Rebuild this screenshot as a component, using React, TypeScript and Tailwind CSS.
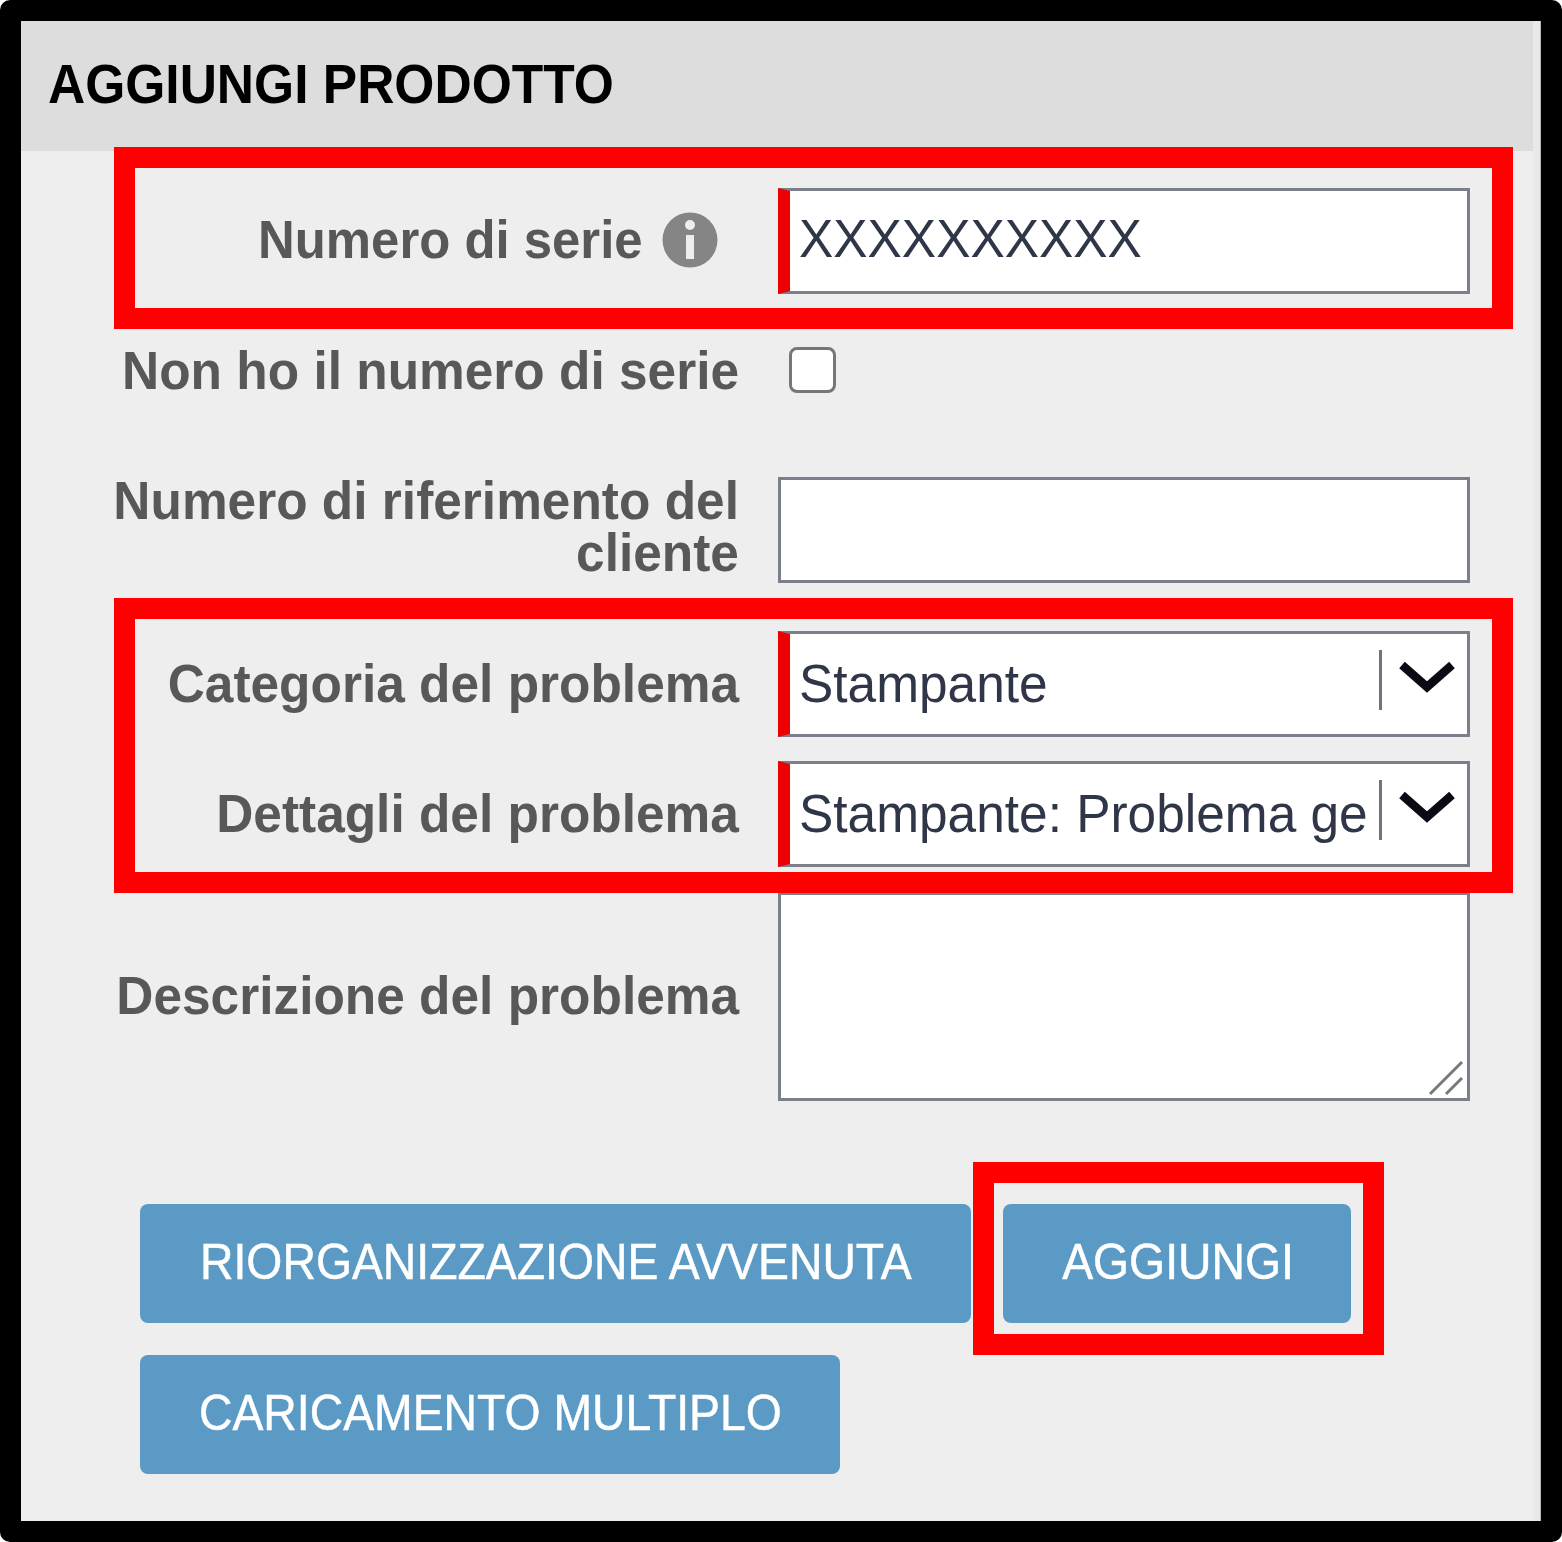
import React from "react";

const font = { fontFamily: '"Liberation Sans", Arial, sans-serif' };

function Label({ children, className = "" }: { children: React.ReactNode; className?: string }) {
  return (
    <div className={"w-[718px] shrink-0 text-right text-[53px] leading-[52px] font-bold text-[#585858] " + className}>
      {children}
    </div>
  );
}

function Narrow({ children, className = "scale-x-[0.97]" }: { children: React.ReactNode; className?: string }) {
  return <span className={"inline-block origin-right whitespace-nowrap " + className}>{children}</span>;
}

function Field({ required = false, children, className = "h-[106px]" }: { required?: boolean; children?: React.ReactNode; className?: string }) {
  return (
    <div className={"relative ml-[39px] flex w-[692px] shrink-0 items-center border-[3px] border-[#7b7f8a] bg-white " + (required ? "border-l-[12px] border-l-[#ee0000] " : "") + className}>
      {children}
    </div>
  );
}

function FieldText({ children }: { children: React.ReactNode }) {
  return (
    <span className="ml-[9px] inline-block origin-left scale-x-[0.97] whitespace-nowrap text-[53px] leading-[60px] text-[#2f3648]">
      {children}
    </span>
  );
}

function Select({ text }: { text: string }) {
  return (
    <Field required>
      <FieldText>{text}</FieldText>
      <span className="absolute left-[589px] top-[16px] h-[60px] w-[3px] bg-[#6f7380]" />
      <svg className="absolute left-[607px] top-[26px]" width="60" height="36" viewBox="0 0 60 36">
        <path d="M5 5 L30 27 L55 5" fill="none" stroke="#0a0a14" strokeWidth="8.5" />
      </svg>
    </Field>
  );
}

function Btn({ children, className = "" }: { children: React.ReactNode; className?: string }) {
  return (
    <button className={"flex h-[119px] items-center justify-center rounded-[8px] bg-[#5a9ac5] text-white " + className}>
      <span className="inline-block origin-center -translate-y-[1px] scale-x-[0.927] whitespace-nowrap text-[50px] [-webkit-text-stroke:0.5px_white]">
        {children}
      </span>
    </button>
  );
}

function RedBox({ className }: { className: string }) {
  return <div className={"absolute border-[21px] border-[#ff0000] " + className} />;
}

export default function App() {
  return (
    <div className="relative flex h-[1542px] w-[1562px] rounded-[10px] border-[21px] border-black bg-[#eeeeee]" style={font}>
      <div className="flex min-w-0 flex-1 flex-col">
        <div className="flex h-[130px] items-center bg-[#dddddd] pb-[4px] pl-[27px]">
          <h1 className="origin-left scale-x-[0.92] whitespace-nowrap text-[56px] font-bold text-black">AGGIUNGI PRODOTTO</h1>
        </div>

        <div className="mt-[37px] flex items-center">
          <Label className="-translate-y-[1px]">
            <span className="inline-flex items-center">
              <Narrow className="scale-x-[0.96]">Numero di serie</Narrow>
              <svg className="ml-[19px] mr-[21px]" width="56" height="56" viewBox="0 0 56 56">
                <circle cx="28" cy="28" r="27.5" fill="#858585" />
                <rect x="24" y="23" width="8" height="24" fill="#eeeeee" />
                <circle cx="28" cy="13" r="5" fill="#eeeeee" />
              </svg>
            </span>
          </Label>
          <Field required>
            <FieldText>
              <span className="inline-block -translate-y-[2px]">XXXXXXXXXX</span>
            </FieldText>
          </Field>
        </div>

        <div className="mt-[52px] flex items-center">
          <Label className="-translate-y-[1px]">
            <Narrow>Non ho il numero di serie</Narrow>
          </Label>
          <div className="ml-[50px] h-[46px] w-[47px] -translate-y-[2px] rounded-[8px] border-[3px] border-[#767676] bg-white" />
        </div>

        <div className="mt-[79px] flex items-start">
          <Label className="-mt-[2px]">
            <Narrow>Numero di riferimento del</Narrow>
            <br />
            <Narrow>cliente</Narrow>
          </Label>
          <Field />
        </div>

        <div className="mt-[48px] flex items-center">
          <Label>
            <Narrow>Categoria del problema</Narrow>
          </Label>
          <Select text="Stampante" />
        </div>

        <div className="mt-[24px] flex items-center">
          <Label>
            <Narrow>Dettagli del problema</Narrow>
          </Label>
          <Select text="Stampante: Problema ge" />
        </div>

        <div className="mt-[25px] flex items-center">
          <Label className="-translate-y-[1px]">
            <Narrow>Descrizione del problema</Narrow>
          </Label>
          <Field className="h-[209px]">
            <svg className="absolute bottom-[1px] right-[0px]" width="40" height="40" viewBox="0 0 40 40">
              <path d="M3 37 L35 5" stroke="#777777" strokeWidth="3" fill="none" />
              <path d="M19 37 L35 21" stroke="#777777" strokeWidth="3" fill="none" />
            </svg>
          </Field>
        </div>

        <div className="mt-[103px] ml-[119px] flex w-[1250px] flex-wrap gap-[32px]">
          <Btn className="w-[831px]">RIORGANIZZAZIONE AVVENUTA</Btn>
          <Btn className="w-[348px] pl-[3px]">AGGIUNGI</Btn>
          <Btn className="w-[700px]">CARICAMENTO MULTIPLO</Btn>
        </div>
      </div>

      <div className="w-[8px] shrink-0 border-r border-[#b9b9b9] bg-[#e9e9e9]" />

      <RedBox className="left-[93px] top-[126px] h-[182px] w-[1399px]" />
      <RedBox className="left-[93px] top-[577px] h-[295px] w-[1399px]" />
      <RedBox className="left-[952px] top-[1141px] h-[193px] w-[411px]" />
    </div>
  );
}
